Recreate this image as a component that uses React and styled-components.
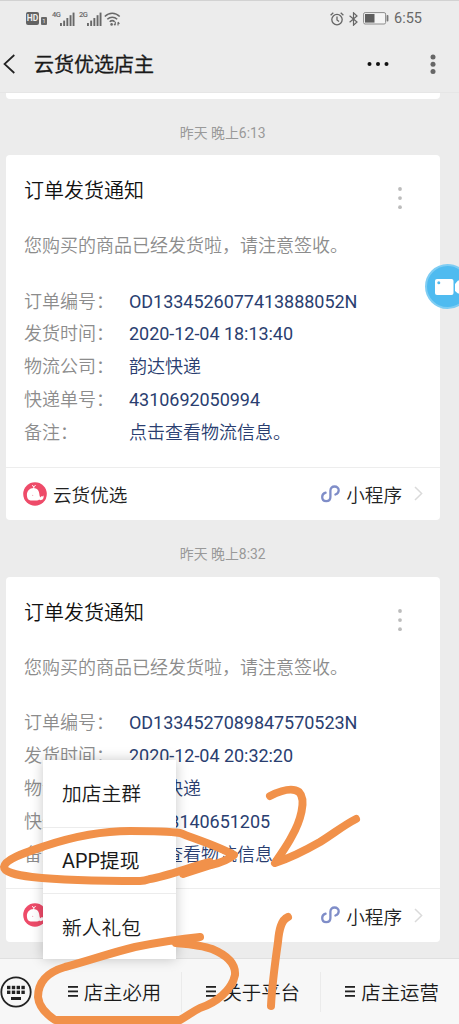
import React from "react";
import styled, { createGlobalStyle } from "styled-components";

const orders = [
	{
		id: 1,
		time: "昨天 晚上6:13",
		rows: [
			["订单编号：", "OD1334526077413888052N"],
			["发货时间：", "2020-12-04 18:13:40"],
			["物流公司：", "韵达快递"],
			["快递单号：", "4310692050994"],
			["备注：", "点击查看物流信息。"],
		],
	},
	{
		id: 2,
		time: "昨天 晚上8:32",
		rows: [
			["订单编号：", "OD1334527089847570523N"],
			["发货时间：", "2020-12-04 20:32:20"],
			["物流公司：", "韵达快递"],
			["快递单号：", "43103140651205"],
			["备注：", "点击查看物流信息。"],
		],
	},
];

const popupItems = ["加店主群", "APP提现", "新人礼包"];
const menuItems = ["店主必用", "关于平台", "店主运营"];

const hasLatin = (text) => /[A-Z0-9]/.test(text);

/* ================ */
/* Icons            */
/* ================ */
const Signal = () => (
	<svg width="15" height="14" viewBox="0 0 15 14" fill="#686868">
		<rect x="0" y="11" width="1.9" height="3" />
		<rect x="3.2" y="8.6" width="1.9" height="5.4" />
		<rect x="6.4" y="6" width="1.9" height="8" />
		<rect x="9.6" y="3.2" width="1.9" height="10.8" />
		<rect x="12.6" y="0.6" width="1.9" height="13.4" />
	</svg>
);

const WifiIcon = () => (
	<svg width="17" height="14" viewBox="0 0 17 14" fill="none" stroke="#686868" strokeWidth="1.5">
		<path d="M.8 4.6C5 .2 11.4 .2 15.7 4.6" />
		<path d="M3.3 7.3c2.9-2.9 7-2.9 9.9 0" />
		<path d="M5.7 9.8c1.5-1.4 3.6-1.4 5 0" />
		<circle cx="7.6" cy="12.4" r="1.3" fill="#686868" stroke="none" />
		<path d="M11.3 9.8v3M11.3 13.4l-1.3-1.6M14 13.6v-3M14 10l1.4 1.8" strokeWidth="1.1" />
	</svg>
);

const AlarmIcon = () => (
	<svg width="14" height="14" viewBox="0 0 14 14" fill="none" stroke="#666" strokeWidth="1.3">
		<circle cx="7" cy="7.6" r="5.2" />
		<path d="M7 4.6v3.3l2 1.5M.6 3.2 3.3.8M13.4 3.2 10.7.8" />
	</svg>
);

const BluetoothIcon = () => (
	<svg width="9" height="14" viewBox="0 0 9 14" fill="none" stroke="#666" strokeWidth="1.2">
		<path d="M.6 3.8 8 10 4.5 13.2V.8L8 4 .6 10.2" />
	</svg>
);

const BatteryIcon = () => (
	<svg width="26" height="13" viewBox="0 0 26 13">
		<rect x=".6" y=".6" width="22" height="11.4" rx="1.5" fill="#f4f4f4" stroke="#8c8c8c" />
		<rect x="2" y="2" width="9.5" height="8.6" fill="#5e5e5e" />
		<rect x="23.6" y="3" width="1.8" height="6.6" rx=".8" fill="#777" />
	</svg>
);

const BackIcon = () => (
	<svg width="13" height="20" viewBox="0 0 13 20" fill="none" stroke="#222" strokeWidth="1.7">
		<path d="M11.3 1 1.5 10l9.8 9" />
	</svg>
);

const MoreIcon = () => (
	<svg width="24" height="6" viewBox="0 0 24 6" fill="#111">
		<circle cx="3.5" cy="3" r="2" />
		<circle cx="12" cy="3" r="2" />
		<circle cx="20.5" cy="3" r="2" />
	</svg>
);

const VerticalDots = ({ gap, r, color }) => (
	<svg width="6" height={gap * 2 + 6} fill={color}>
		<circle cx="3" cy="3" r={r} />
		<circle cx="3" cy={3 + gap} r={r} />
		<circle cx="3" cy={3 + gap * 2} r={r} />
	</svg>
);

const WhaleLogo = () => (
	<svg width="24" height="24" viewBox="0 0 24 24">
		<circle cx="12" cy="12" r="11.8" fill="#ee4b69" />
		<path
			d="M3.9 13.2C3.9 9 6.7 6.100 10.400 6.100c3.700 0 5.900 2.800 6 6.500.1 1.900.8 2.900 1.900 2.500l-.5-1.200 1.500.5 1.300-1c.3 2.600-.6 4.500-2.700 4.700-.7.100-1.200-.1-1.700-.5-.5.600-1.300.9-2.300.9H7.600c-2.300-.1-3.700-2.400-3.700-5.300z"
			fill="#fff"
		/>
		<path d="M10.8 6.5V4.2M10.8 4.6 9 3.4M10.8 4.6l1.9-1.2" stroke="#fff" strokeWidth="1" fill="none" />
		<circle cx="9.7" cy="13.3" r=".6" fill="#f3a4b2" />
	</svg>
);

const MiniProgramIcon = () => (
	<svg width="19" height="18" viewBox="0 0 19 18" fill="none" stroke="#7f8dc8" strokeWidth="2.3" strokeLinecap="round">
		<path d="M4.6 7.7C2.5 8.3 1.2 9.9 1.2 12c0 2.5 1.7 4.2 4 4.2 2.4 0 4.2-1.6 4.2-4.1V5.7c0-2.5 1.8-4.2 4.2-4.2 2.3 0 4.1 1.5 4.1 3.8 0 2.1-1.3 3.6-3.3 4.2" />
	</svg>
);

const ArrowIcon = () => (
	<svg width="9" height="15" viewBox="0 0 9 15" fill="none" stroke="#dadada" strokeWidth="1.5">
		<path d="M1 1l6.6 6.5L1 14" />
	</svg>
);

const KeyboardIcon = () => (
	<svg width="32" height="32" viewBox="0 0 32 32">
		<circle cx="16" cy="16" r="14.7" fill="none" stroke="#222" strokeWidth="1.8" />
		<g fill="#222">
			{[7, 11.8, 16.6, 21.4].map((x) => (
				<React.Fragment key={x}>
					<rect x={x} y="9.8" width="3.4" height="3.4" />
					<rect x={x} y="14.6" width="3.4" height="3.4" />
				</React.Fragment>
			))}
			<rect x="11" y="21" width="10" height="3" />
		</g>
	</svg>
);

const BarsIcon = () => (
	<svg width="10" height="11" viewBox="0 0 10 11" fill="#222">
		<rect width="10" height="1.8" />
		<rect y="4.5" width="10" height="1.8" />
		<rect y="9" width="10" height="1.8" />
	</svg>
);

const CameraIcon = () => (
	<svg width="28" height="18" viewBox="0 0 28 18" fill="#fff">
		<rect x="0" y="1" width="18.5" height="16" rx="2" />
		<path d="M20 6l3-3.500h5v13h-5L20 13z" />
		<circle cx="3.800" cy="4.700" r="1.500" fill="#53b9ec" />
	</svg>
);

/* ================ */
/* Order Card       */
/* ================ */
const OrderCard = ({ rows }) => (
	<Card>
		<CardBody>
			<CardHead>
				<CardTitle>订单发货通知</CardTitle>
				<VerticalDots gap={9.1} r={1.9} color="#bcbcbc" />
			</CardHead>
			<Intro>您购买的商品已经发货啦，请注意签收。</Intro>
			{rows.map(([label, value]) => (
				<Row key={label}>
					<Label>{label}</Label>
					<Value $light={!hasLatin(value)}>{value}</Value>
				</Row>
			))}
		</CardBody>
		<CardFooter>
			<WhaleLogo />
			<ShopName>云货优选</ShopName>
			<MiniProgramIcon />
			<MiniText>小程序</MiniText>
			<ArrowIcon />
		</CardFooter>
	</Card>
);

const App = () => {
	return (
		<Screen>
			<GlobalStyle />
			<StatusBar>
				<HdBadge>HD</HdBadge>
				<SimBadge>1</SimBadge>
				<Network>4G</Network>
				<Signal />
				<Network $second>2G</Network>
				<Signal />
				<WifiBox>
					<WifiIcon />
				</WifiBox>
				<StatusRight>
					<AlarmIcon />
					<BluetoothIcon />
					<BatteryIcon />
					<Clock>6:55</Clock>
				</StatusRight>
			</StatusBar>

			<Header>
				<BackIcon />
				<HeaderTitle>云货优选店主</HeaderTitle>
				<MoreIcon />
				<VerticalDots gap={7.2} r={2.5} color="#666" />
			</Header>

			<Chat>
				<PreviousCard />
				{orders.map((order) => (
					<React.Fragment key={order.id}>
						<TimeStamp>{order.time}</TimeStamp>
						<OrderCard rows={order.rows} />
					</React.Fragment>
				))}
			</Chat>

			<BottomBar>
				<KeyboardButton>
					<KeyboardIcon />
				</KeyboardButton>
				{menuItems.map((item) => (
					<MenuItem key={item}>
						<BarsIcon />
						{item}
					</MenuItem>
				))}
				<Popup>
					{popupItems.map((item) => (
						<PopupItem key={item} $light={!hasLatin(item)}>
							{item}
						</PopupItem>
					))}
				</Popup>
			</BottomBar>

			<RecordButton>
				<CameraIcon />
			</RecordButton>

			{/* Hand drawn marks */}
			<Marks viewBox="0 0 459 1024">
				<path d="M150 879C147 880 143 881 140 881C100 881 60 880 32 877C16 875 4 872 4 867C5 859 24 853 45 846C72 837 100 831 130 831C152 831 166 831 180 833C198 840 218 846 234 855C227 861 220 863 211 865L183 874L210 862C190 867 168 876 150 879" />
				<path d="M200 937C180 939 160 942 135 947C110 953 85 962 65 967C48 972 38 982 38 997C39 1007 46 1014 55 1020H180C190 1014 192 1012 200 1008C216 1003 232 990 235 975C236 962 224 954 212 949C202 945 188 944 176 943" />
				<path d="M270 796C280 791 292 787 299 792C307 800 300 822 292 836C287 846 280 855 275 863C290 858 306 850 320 842C333 834 344 825 356 819" />
				<path d="M288 917C281 920 279 930 278 942C275 963 272 985 271 1006" />
			</Marks>
		</Screen>
	);
};

const GlobalStyle = createGlobalStyle`
	* {
		box-sizing: border-box;
	}

	body {
		margin: 0;
		background: #ececec;
		font-family: Roboto, "Noto Sans CJK SC", sans-serif;
	}

	svg {
		display: block;
		flex-shrink: 0;
	}
`;

const Screen = styled.div`
	position: relative;
	display: flex;
	flex-direction: column;
	width: 459px;
	height: 1024px;
	overflow: hidden;
	background: #ececec;
	white-space: nowrap;
`;

const StatusBar = styled.div`
	display: flex;
	align-items: center;
	height: 36px;
	padding: 0 37px 0 26px;
	border-top: 1px solid #d2d2d2;
	color: #686868;
`;

const HdBadge = styled.span`
	width: 13px;
	height: 13px;
	border-radius: 2px;
	background: #626262;
	color: #eee;
	font-size: 8.5px;
	font-weight: 700;
	line-height: 13px;
	text-align: center;
`;

const SimBadge = styled.span`
	width: 6px;
	height: 8px;
	margin: 4px 4px 0 2px;
	border-radius: 1px;
	background: #686868;
	color: #eee;
	font-size: 6px;
	line-height: 8px;
	text-align: center;
`;

const Network = styled.span`
	width: 8px;
	height: 16px;
	margin-left: ${(props) => (props.$second ? "4px" : "1px")};
	font-size: 7.5px;
	font-weight: 500;
	letter-spacing: -0.5px;
	line-height: 8px;
`;

const WifiBox = styled.div`
	margin-left: 2px;
`;

const StatusRight = styled.div`
	display: flex;
	align-items: center;
	gap: 5px;
	margin-left: auto;
`;

const Clock = styled.span`
	font-size: 14.5px;
	line-height: 18px;
`;

const Header = styled.header`
	display: flex;
	align-items: center;
	height: 56px;
	padding: 0 23px 0 3px;

	> svg:last-child {
		margin-left: 40px;
	}
`;

const HeaderTitle = styled.h1`
	flex: 1;
	margin: 2px 0 0 18px;
	color: #1a1a1a;
	font-size: 20px;
	font-weight: 400;
	line-height: 28px;
	-webkit-text-stroke: 0.3px #1a1a1a;
`;

const Chat = styled.main`
	height: 866px;
	padding: 0 19px 0 5.5px;
	border-top: 1px solid #e6e6e6;
`;

const PreviousCard = styled.div`
	height: 5.5px;
	border-radius: 0 0 4px 4px;
	background: #fff;
`;

const TimeStamp = styled.div`
	height: 56.5px;
	padding: 5px 0 0;
	color: #999;
	font-size: 13.9px;
	line-height: 58px;
	text-align: center;
`;

const Card = styled.section`
	height: 365px;
	border-radius: 4px;
	background: #fff;
`;

const CardBody = styled.div`
	height: 312.5px;
	padding: 21px 18.5px 0;
	border-bottom: 1px solid #ededed;
`;

const CardHead = styled.div`
	display: flex;
	justify-content: space-between;
	height: 55px;
	padding-right: 19px;

	svg {
		margin-top: 10px;
	}
`;

const CardTitle = styled.h2`
	margin: 0;
	color: #111;
	font-size: 20px;
	font-weight: 350;
	line-height: 31px;
`;

const Intro = styled.p`
	height: 53.5px;
	margin: 0;
	color: #8c8c8c;
	font-size: 18px;
	font-weight: 350;
	line-height: 30px;
`;

const Row = styled.div`
	display: flex;
	height: 32.9px;
	font-size: 18px;
	line-height: 33px;
`;

const Label = styled.span`
	width: 105px;
	color: #8c8c8c;
	font-weight: 350;
	line-height: 34px;
`;

const Value = styled.span`
	color: #2a3e70;
	font-weight: ${(props) => (props.$light ? 350 : 400)};
	letter-spacing: ${(props) => (props.$light ? "0" : "-0.04px")};
	line-height: ${(props) => (props.$light ? "34px" : "33px")};
`;

const CardFooter = styled.div`
	display: flex;
	align-items: center;
	height: 52.5px;
	padding: 0 17px 0 17.5px;
	color: #222;
	font-size: 18.6px;
	font-weight: 350;
`;

const ShopName = styled.span`
	flex: 1;
	margin-left: 6px;
`;

const MiniText = styled.span`
	margin: 0 12px 0 6px;
`;

const BottomBar = styled.footer`
	position: relative;
	display: flex;
	align-items: center;
	height: 66px;
	border-top: 1px solid #e0e0e0;
	background: #f7f7f7;
`;

const KeyboardButton = styled.div`
	width: 44px;
	margin-left: -0.5px;
`;

const MenuItem = styled.div`
	display: flex;
	flex: 1;
	align-items: center;
	justify-content: center;
	gap: 6px;
	height: 40px;
	padding-left: 4px;
	color: #1a1a1a;
	font-size: 19.4px;
	font-weight: 350;

	& + & {
		border-left: 1px solid #ebebeb;
	}
`;

const Popup = styled.div`
	position: absolute;
	bottom: 65px;
	left: 43px;
	width: 132.5px;
	background: #fff;
	box-shadow: 0 0 12px rgba(0, 0, 0, 0.22);
`;

const PopupItem = styled.div`
	height: 66.2px;
	padding-left: 19px;
	color: #1a1a1a;
	font-size: 19.8px;
	font-weight: ${(props) => (props.$light ? 350 : 400)};
	line-height: ${(props) => (props.$light ? "69px" : "67px")};

	& + & {
		border-top: 1px solid #ececec;
	}
`;

const RecordButton = styled.div`
	position: absolute;
	top: 264px;
	left: 425px;
	display: flex;
	align-items: center;
	width: 45px;
	height: 45px;
	padding-left: 8px;
	border: 2px solid #7fcdf3;
	border-radius: 50%;
	background: #4fbbf0;
`;

const Marks = styled.svg`
	position: absolute;
	inset: 0;
	width: 459px;
	height: 1024px;
	fill: none;
	stroke: #f1914a;
	stroke-width: 8px;
	stroke-linecap: round;
	stroke-linejoin: round;
	pointer-events: none;
`;

export default App;
